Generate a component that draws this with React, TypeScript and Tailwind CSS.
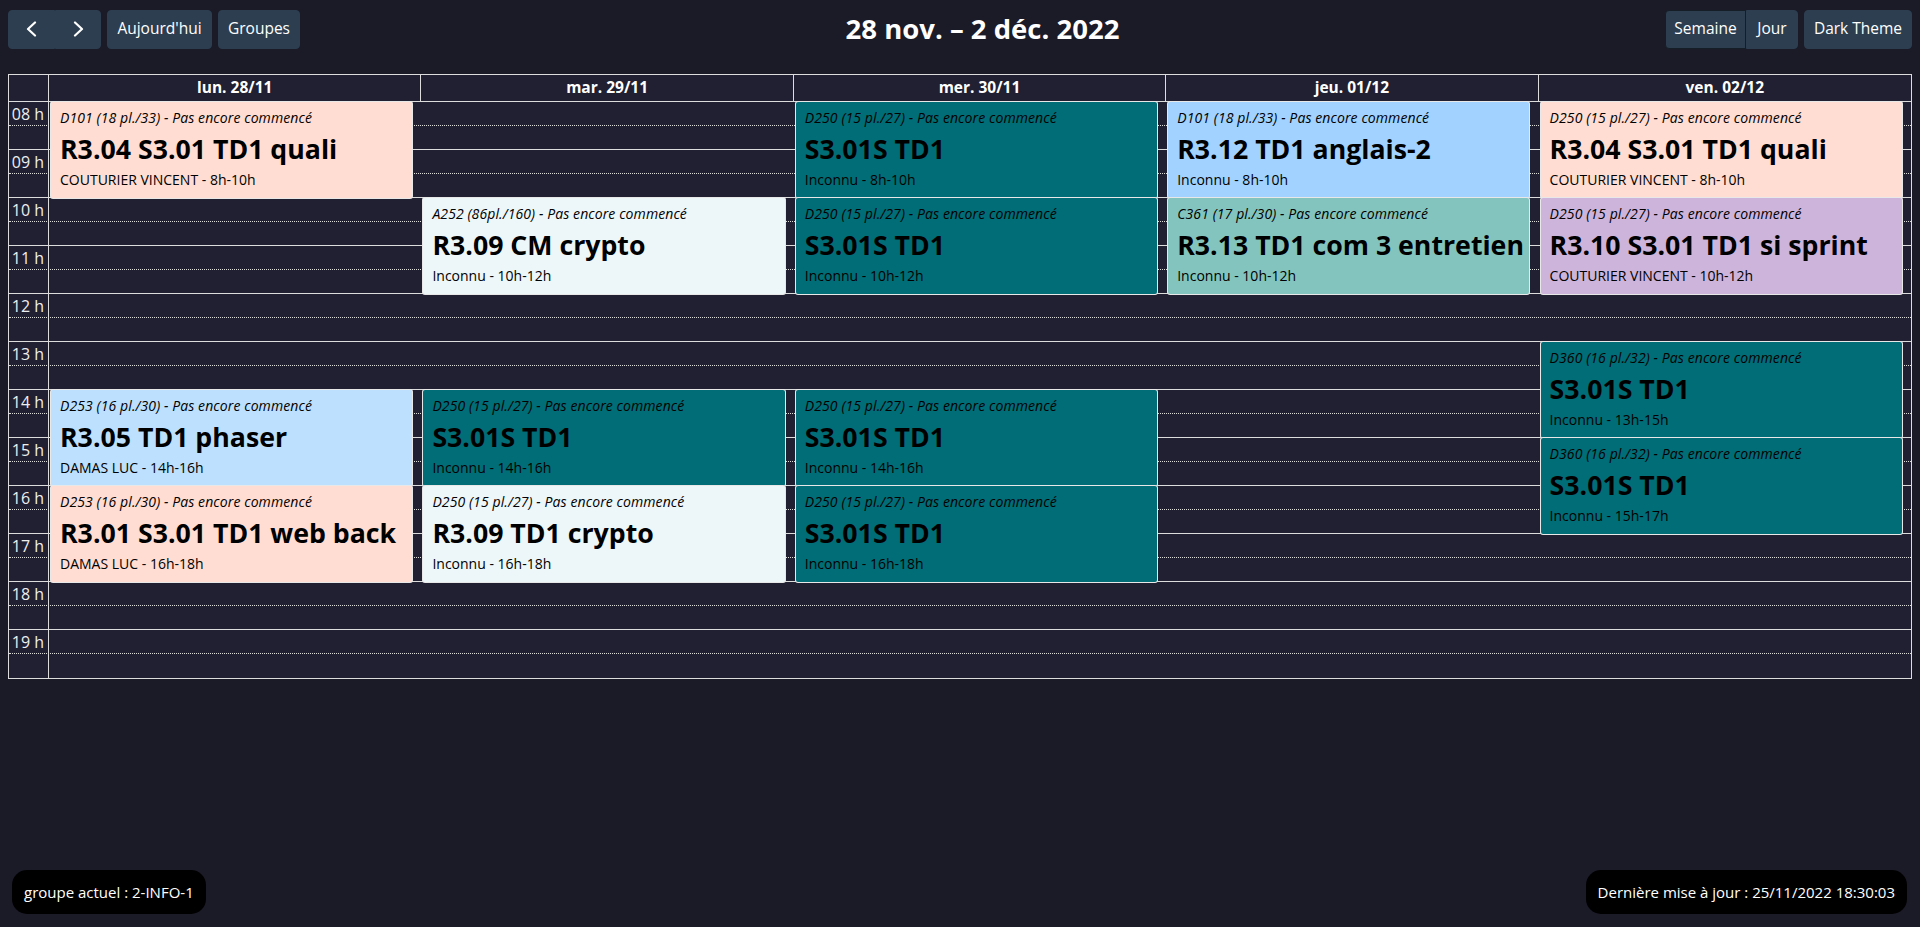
import { ReactNode } from 'react'

type Ev = {
  day: number
  start: number
  end: number
  room: string
  title: string
  who: string
  bg: string
}

const PEACH = 'bg-[#ffddd2]'
const TEAL = 'bg-[#006d77]'
const ICE = 'bg-[#edf6f9]'

const events: Ev[] = [
  { day: 0, start: 8, end: 10, room: 'D101 (18 pl./33)', title: 'R3.04 S3.01 TD1 quali', who: 'COUTURIER VINCENT', bg: PEACH },
  { day: 0, start: 14, end: 16, room: 'D253 (16 pl./30)', title: 'R3.05 TD1 phaser', who: 'DAMAS LUC', bg: 'bg-[#bde0fe]' },
  { day: 0, start: 16, end: 18, room: 'D253 (16 pl./30)', title: 'R3.01 S3.01 TD1 web back', who: 'DAMAS LUC', bg: PEACH },
  { day: 1, start: 10, end: 12, room: 'A252 (86pl./160)', title: 'R3.09 CM crypto', who: 'Inconnu', bg: ICE },
  { day: 1, start: 14, end: 16, room: 'D250 (15 pl./27)', title: 'S3.01S TD1', who: 'Inconnu', bg: TEAL },
  { day: 1, start: 16, end: 18, room: 'D250 (15 pl./27)', title: 'R3.09 TD1 crypto', who: 'Inconnu', bg: ICE },
  { day: 2, start: 8, end: 10, room: 'D250 (15 pl./27)', title: 'S3.01S TD1', who: 'Inconnu', bg: TEAL },
  { day: 2, start: 10, end: 12, room: 'D250 (15 pl./27)', title: 'S3.01S TD1', who: 'Inconnu', bg: TEAL },
  { day: 2, start: 14, end: 16, room: 'D250 (15 pl./27)', title: 'S3.01S TD1', who: 'Inconnu', bg: TEAL },
  { day: 2, start: 16, end: 18, room: 'D250 (15 pl./27)', title: 'S3.01S TD1', who: 'Inconnu', bg: TEAL },
  { day: 3, start: 8, end: 10, room: 'D101 (18 pl./33)', title: 'R3.12 TD1 anglais-2', who: 'Inconnu', bg: 'bg-[#a2d2ff]' },
  { day: 3, start: 10, end: 12, room: 'C361 (17 pl./30)', title: 'R3.13 TD1 com 3 entretien', who: 'Inconnu', bg: 'bg-[#83c5be]' },
  { day: 4, start: 8, end: 10, room: 'D250 (15 pl./27)', title: 'R3.04 S3.01 TD1 quali', who: 'COUTURIER VINCENT', bg: PEACH },
  { day: 4, start: 10, end: 12, room: 'D250 (15 pl./27)', title: 'R3.10 S3.01 TD1 si sprint', who: 'COUTURIER VINCENT', bg: 'bg-[#cdb4db]' },
  { day: 4, start: 13, end: 15, room: 'D360 (16 pl./32)', title: 'S3.01S TD1', who: 'Inconnu', bg: TEAL },
  { day: 4, start: 15, end: 17, room: 'D360 (16 pl./32)', title: 'S3.01S TD1', who: 'Inconnu', bg: TEAL }
]

const days = ['lun. 28/11', 'mar. 29/11', 'mer. 30/11', 'jeu. 01/12', 'ven. 02/12']
const hours = [8, 9, 10, 11, 12, 13, 14, 15, 16, 17, 18, 19]
const slots = Array.from({ length: 24 }, (_, i) => i)

function Btn({ children, className = '' }: { children: ReactNode; className?: string }) {
  return (
    <button
      className={`flex h-[39px] items-center justify-center border border-[#2c3e50] bg-[#2c3e50] text-[15.5px] text-white ${className}`}
    >
      {children}
    </button>
  )
}

function Chevron({ left }: { left?: boolean }) {
  return (
    <svg width="16" height="16" viewBox="0 0 16 16" fill="none">
      <path
        d={left ? 'M11 1.5 L4 8 L11 14.5' : 'M5 1.5 L12 8 L5 14.5'}
        stroke="white"
        strokeWidth="2.2"
        strokeLinecap="round"
        strokeLinejoin="round"
      />
    </svg>
  )
}

function EventCard({ ev }: { ev: Ev }) {
  return (
    <div
      className={`ml-[2px] mr-[2.5%] flex flex-col overflow-hidden rounded-[2px] pl-[9px] pt-[5px] text-black shadow-[0_0_0_1px_#e8e8e8] ${ev.bg}`}
      style={{
        gridColumn: ev.day + 2,
        gridRow: `${(ev.start - 8) * 2 + 1} / span ${(ev.end - ev.start) * 2}`
      }}
    >
      <p className="whitespace-nowrap text-[14px] italic leading-[22px] tracking-[0.1px]">
        {ev.room} - Pas encore commencé
      </p>
      <p className="whitespace-nowrap text-[26.7px] font-bold leading-[40px]">{ev.title}</p>
      <p className="whitespace-nowrap text-[14px] leading-[22px]">
        {ev.who} - {ev.start}h-{ev.end}h
      </p>
    </div>
  )
}

export default function App() {
  return (
    <div className="flex min-h-screen flex-col bg-[#1b1a27] font-['Open_Sans',sans-serif] text-white">
      {/* toolbar */}
      <div className="mb-[25px] flex items-center justify-between px-2 pt-[9px]">
        <div className="flex items-center gap-[6px]">
          <div className="flex">
            <Btn className="w-[47px] rounded-l-[4px]">
              <Chevron left />
            </Btn>
            <Btn className="w-[46px] rounded-r-[4px]">
              <Chevron />
            </Btn>
          </div>
          <Btn className="w-[105px] rounded-[4px]">Aujourd'hui</Btn>
          <Btn className="w-[82px] rounded-[4px]">Groupes</Btn>
        </div>
        <h2 className="text-[27.5px] font-bold leading-[40px]">28 nov. – 2 déc. 2022</h2>
        <div className="flex items-center gap-[6px]">
          <div className="flex">
            <Btn className="w-[81px] rounded-l-[4px] border-[#151e27] bg-[#1a252f]">Semaine</Btn>
            <Btn className="w-[52px] rounded-r-[4px]">Jour</Btn>
          </div>
          <Btn className="w-[108px] rounded-[4px]">Dark Theme</Btn>
        </div>
      </div>

      {/* calendar */}
      <div className="mx-2 border border-[#dddddd] bg-[#202032]">
        <div className="grid grid-cols-[40px_repeat(5,minmax(0,1fr))] border-b border-[#dddddd]">
          <div className="h-[26px] border-r border-[#dddddd]" />
          {days.map((d, i) => (
            <div
              key={d}
              className={`flex h-[26px] items-center justify-center text-[15.5px] font-bold ${i < 4 ? 'border-r border-[#dddddd]' : ''}`}
            >
              {d}
            </div>
          ))}
        </div>

        <div className="grid grid-cols-[40px_repeat(5,minmax(0,1fr))] grid-rows-[repeat(24,24px)]">
          {slots.map((i) => (
            <div
              key={`s${i}`}
              className={
                i === 23
                  ? ''
                  : i % 2 === 0
                    ? 'border-b border-dotted border-[#dddddd]'
                    : 'border-b border-[#dddddd]'
              }
              style={{ gridColumn: '1 / -1', gridRow: i + 1 }}
            />
          ))}
          {hours.map((h, i) => (
            <div
              key={`h${h}`}
              className="border-r border-[#dddddd] pr-1 text-right text-[16px] leading-[24px] text-[#eeeeee]"
              style={{ gridColumn: 1, gridRow: `${i * 2 + 1} / span 2` }}
            >
              {String(h).padStart(2, '0')} h
            </div>
          ))}
          {events.map((ev, i) => (
            <EventCard key={i} ev={ev} />
          ))}
        </div>
      </div>

      {/* footer */}
      <div className="mt-auto flex items-end justify-between pb-[13px] pl-3 pr-[13px]">
        <div className="rounded-[15px] bg-black px-3 py-[10px] text-[15px] leading-[24px]">
          groupe actuel : 2-INFO-1
        </div>
        <div className="rounded-[15px] bg-black px-3 py-[10px] text-[15px] leading-[24px]">
          Dernière mise à jour : 25/11/2022 18:30:03
        </div>
      </div>
    </div>
  )
}
